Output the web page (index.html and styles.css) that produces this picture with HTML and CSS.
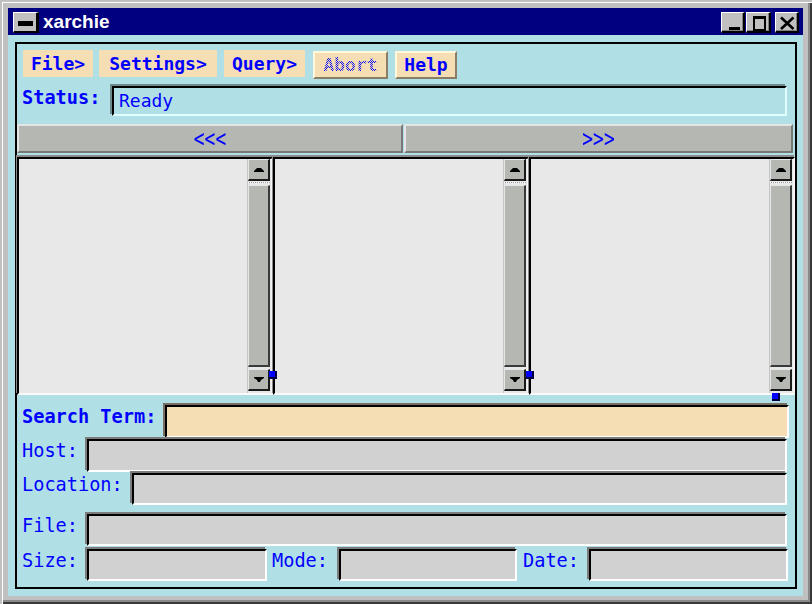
FILE: index.html
```html
<!DOCTYPE html>
<html>
<head>
<meta charset="utf-8">
<title>xarchie</title>
<link rel="stylesheet" href="styles.css">
</head>
<body>
<div class="win">
  <div class="titlebar">
    <div class="tb-menu"><span class="tb-menu-bar"></span></div>
    <div class="tb-title">xarchie</div>
    <div class="tb-btns">
      <div class="tb-btn tb-min"><svg width="21" height="18" viewBox="0 0 21 18"><rect x="7" y="14" width="11" height="3" fill="#000"/></svg></div>
      <div class="tb-btn tb-max"><svg width="22" height="18" viewBox="0 0 22 18"><path d="M6 3h13v15H6z M8 6h9v10H8z" fill="#000" fill-rule="evenodd"/></svg></div>
      <div class="tb-btn tb-close"><svg width="21" height="18" viewBox="0 0 21 18"><path d="M5 4.5 L17.5 16 M17.5 4.5 L5 16" stroke="#000" stroke-width="2.6" fill="none"/></svg></div>
    </div>
  </div>
  <div class="client">
    <div class="frame">
      <div class="menubar">
        <div class="mb w-file">File&gt;</div>
        <div class="mb w-settings">Settings&gt;</div>
        <div class="mb w-query">Query&gt;</div>
        <div class="mb pb w-abort"><span class="stip">Abort</span></div>
        <div class="mb pb w-help">Help</div>
      </div>
      <div class="status-row">
        <div class="lbl b w-status">Status:</div>
        <div class="sfield">Ready</div>
      </div>
      <div class="arrows">
        <div class="ab ab-l"><span>&lt;&lt;&lt;</span></div>
        <div class="ab ab-r"><span>&gt;&gt;&gt;</span></div>
      </div>
      <div class="panes">
        <div class="pane p1">
          <div class="list"></div>
          <div class="sb">
            <div class="sbtn"><svg width="10" height="4" viewBox="0 0 10 4"><polygon points="3,0 7,0 10,3 10,4 0,4 0,3" fill="#000"/></svg></div>
            <div class="dots"></div>
            <div class="slider"></div>
            <div class="sbtn down"><svg width="10" height="5" viewBox="0 0 10 5"><polygon points="0,0 10,0 10,1 7,3 6,5 4,5 3,3 0,1" fill="#000"/></svg></div>
          </div>
        </div>
        <div class="pane p2">
          <div class="list"></div>
          <div class="sb">
            <div class="sbtn"><svg width="10" height="4" viewBox="0 0 10 4"><polygon points="3,0 7,0 10,3 10,4 0,4 0,3" fill="#000"/></svg></div>
            <div class="dots"></div>
            <div class="slider"></div>
            <div class="sbtn down"><svg width="10" height="5" viewBox="0 0 10 5"><polygon points="0,0 10,0 10,1 7,3 6,5 4,5 3,3 0,1" fill="#000"/></svg></div>
          </div>
        </div>
        <div class="pane p3">
          <div class="list"></div>
          <div class="sb">
            <div class="sbtn"><svg width="10" height="4" viewBox="0 0 10 4"><polygon points="3,0 7,0 10,3 10,4 0,4 0,3" fill="#000"/></svg></div>
            <div class="dots"></div>
            <div class="slider"></div>
            <div class="sbtn down"><svg width="10" height="5" viewBox="0 0 10 5"><polygon points="0,0 10,0 10,1 7,3 6,5 4,5 3,3 0,1" fill="#000"/></svg></div>
          </div>
        </div>
        <span class="sash s1"></span>
        <span class="sash s2"></span>
        <span class="sash s3"></span>
      </div>
      <div class="form">
        <div class="row r1">
          <div class="lbl b w-search">Search Term:</div>
          <div class="field tan grow mr6"></div>
        </div>
        <div class="row r2">
          <div class="lbl w-host">Host:</div>
          <div class="field grow mr8"></div>
        </div>
        <div class="row r3">
          <div class="lbl w-loc">Location:</div>
          <div class="field grow mr8"></div>
        </div>
        <div class="row r4">
          <div class="lbl w-host">File:</div>
          <div class="field grow mr8"></div>
        </div>
        <div class="row r5">
          <div class="lbl w-host">Size:</div>
          <div class="field w-size"></div>
          <div class="lbl w-mode">Mode:</div>
          <div class="field w-modef"></div>
          <div class="lbl w-date">Date:</div>
          <div class="field grow mr7"></div>
        </div>
      </div>
    </div>
  </div>
</div>
</body>
</html>
```

FILE: styles.css
```css
html, body {
  margin: 0;
  padding: 0;
  background: #c0c0c0;
}

.win {
  width: 812px;
  height: 604px;
  box-sizing: border-box;
  padding: 8px 9px 8px 8px;
  display: flex;
  flex-direction: column;
  background: #c0c0c0;
  box-shadow: inset 2px 2px 0 #c0c0c0, inset 3px 3px 0 #ffffff, inset -2px -2px 0 #3a3a3a, inset -4px -4px 0 #8a8a8a;
}

/* title bar */
.titlebar {
  height: 27px;
  flex-shrink: 0;
  background: #000080;
  display: flex;
  align-items: flex-start;
}
.tb-menu {
  margin: 4px 0 0 5px;
  width: 26px;
  height: 21px;
  box-sizing: border-box;
  background: #c0c0c0;
  border-style: solid;
  border-width: 1px 3px 2px 1px;
  border-color: #fff #000 #000 #fff;
  display: flex;
  align-items: center;
  justify-content: center;
}
.tb-menu-bar {
  width: 15px;
  height: 5px;
  background: #000;
  margin-top: 2px;
}
.tb-title {
  margin-left: 4px;
  color: #fff;
  font: bold 19px/27px "Liberation Sans", Arial, sans-serif;
}
.tb-btns {
  margin: 4px 4px 0 auto;
  display: flex;
}
.tb-btn {
  height: 21px;
  box-sizing: border-box;
  background: #c0c0c0;
  border-style: solid;
  border-width: 1px 2px 2px 1px;
  border-color: #fff #000 #000 #fff;
  box-shadow: inset -1px -1px 0 #808080;
}
.tb-btn svg { display: block; }
.tb-min { width: 24px; margin-right: 1px; }
.tb-max { width: 25px; margin-right: 4px; }
.tb-close { width: 24px; }

/* client area */
.client {
  flex: 1;
  background: #b0e0e6;
  padding: 7px 6px 7px 7px;
  display: flex;
  min-height: 0;
}
.frame {
  flex: 1;
  border: 2px solid #000;
  display: flex;
  flex-direction: column;
  min-width: 0;
}

/* menu bar */
.menubar {
  display: flex;
  align-items: flex-start;
  padding: 6px 0 0 6px;
}
.mb {
  height: 27px;
  box-sizing: border-box;
  padding-top: 1px;
  background: #f5deb3;
  color: #0000ff;
  font: bold 18px/26px "DejaVu Sans Mono", monospace;
  text-align: center;
  white-space: pre;
}
.w-file { width: 70px; margin-right: 6px; }
.w-settings { width: 118px; margin-right: 7px; }
.w-query { width: 81px; margin-right: 8px; }
.pb {
  margin-top: 1px;
  height: 28px;
  padding-top: 0;
  line-height: 24px;
  border: 2px solid;
  border-color: #fff8dc #8b7e66 #8b7e66 #fff8dc;
}
.w-abort { width: 75px; margin-right: 7px; }
.w-help { width: 62px; }
.stip {
  color: transparent;
  background-image: repeating-conic-gradient(#0000ff 0 25%, transparent 0 50%);
  background-size: 2px 2px;
  -webkit-background-clip: text;
  background-clip: text;
}

/* labels */
.lbl {
  color: #0000ff;
  font: 18.6px/22px "DejaVu Sans Mono", monospace;
  padding-top: 1px;
  white-space: pre;
  flex-shrink: 0;
  box-sizing: border-box;
}
.lbl.b { font-weight: bold; }

/* status */
.status-row {
  display: flex;
  margin-top: 7px;
  padding-left: 5px;
  height: 30px;
}
.w-status { width: 90px; }
.sfield {
  flex: 1;
  margin-right: 8px;
  box-sizing: border-box;
  border: 2px solid;
  border-color: #000 #e0ffff #e0ffff #000;
  box-shadow: -2px -2px 0 #6e8b8b;
  color: #0000ff;
  font: 18px/26px "DejaVu Sans Mono", monospace;
  padding-left: 5px;
}

/* arrow buttons */
.arrows {
  display: flex;
  margin-top: 8px;
  height: 29px;
  margin-right: 2px;
}
.ab {
  box-sizing: border-box;
  border: 2px solid;
  border-color: #e4e4e4 #787878 #787878 #e4e4e4;
  background: #b5b8b2;
  color: #0000ff;
  font: 18px/25px "DejaVu Sans Mono", monospace;
  text-align: center;
}
.ab span {
  display: inline-block;
  transform: scaleY(1.35);
}
.ab-l { width: 386px; }
.ab-r { flex: 1; margin-left: 1px; }

/* panes */
.panes {
  position: relative;
  display: flex;
  margin-top: 4px;
  height: 238px;
}
.pane {
  box-sizing: border-box;
  display: flex;
  background: #e8e8e8;
  border: 2px solid;
  border-color: #000 #f4f4f4 #fafafa #000;
  box-shadow: -1px -2px 0 #8a8a8a;
}
.p1, .p2 { width: 256px; }
.p3 { flex: 1; }
.list { flex: 1; }
.sb {
  width: 24px;
  box-sizing: border-box;
  border-left: 1px solid #c4c4c4;
  padding-right: 1px;
  display: flex;
  flex-direction: column;
}
.sbtn {
  height: 22px;
  flex-shrink: 0;
  box-sizing: border-box;
  background: #b5b8b2;
  border-style: solid;
  border-width: 1px 2px 2px 1px;
  border-color: #e6e6e6 #1a1a1a #1a1a1a #e6e6e6;
  display: flex;
  align-items: center;
  justify-content: center;
}
.sbtn svg { display: block; }
.sbtn.down { margin-bottom: 2px; }
.dots {
  height: 1px;
  margin: 1px 0 2px;
  background: repeating-linear-gradient(90deg, #ffffff 0 1px, #9a9a9a 1px 2px);
}
.slider {
  flex: 1;
  margin-bottom: 2px;
  box-sizing: border-box;
  background: #b5b8b2;
  border-style: solid;
  border-width: 1px 2px 2px 1px;
  border-color: #e6e6e6 #3a3a3a #3a3a3a #e6e6e6;
}
.sash {
  position: absolute;
  width: 8px;
  height: 8px;
  background: #0000ff;
  box-shadow: inset -2px -2px 0 #000040;
}
.s1 { left: 252px; top: 214px; }
.s2 { left: 509px; top: 214px; }
.s3 { left: 755px; top: 236px; }

/* form */
.form {
  margin-top: 10px;
  padding-left: 5px;
  display: flex;
  flex-direction: column;
}
.row { display: flex; align-items: stretch; }
.r1 { height: 33px; }
.r2 { height: 33px; margin-top: 1px; }
.r3 { height: 32px; margin-top: 1px; }
.r4 { height: 32px; margin-top: 9px; }
.r5 { height: 32px; margin-top: 3px; }
.field {
  box-sizing: border-box;
  border: 2px solid;
  border-color: #000 #fff #fff #000;
  box-shadow: -2px -2px 0 #7c7c7c;
  background: #d1d1d1;
}
.field.tan {
  background: #f5deb3;
  box-shadow: -2px -2px 0 #7a6e60;
}
.grow { flex: 1; }
.mr6 { margin-right: 6px; }
.mr7 { margin-right: 7px; }
.mr8 { margin-right: 8px; }
.w-search { width: 143px; }
.w-host { width: 65px; }
.w-loc { width: 110px; }
.w-size { width: 180px; }
.w-mode { width: 72px; padding-left: 5px; }
.w-modef { width: 178px; }
.w-date { width: 72px; padding-left: 6px; }
```
